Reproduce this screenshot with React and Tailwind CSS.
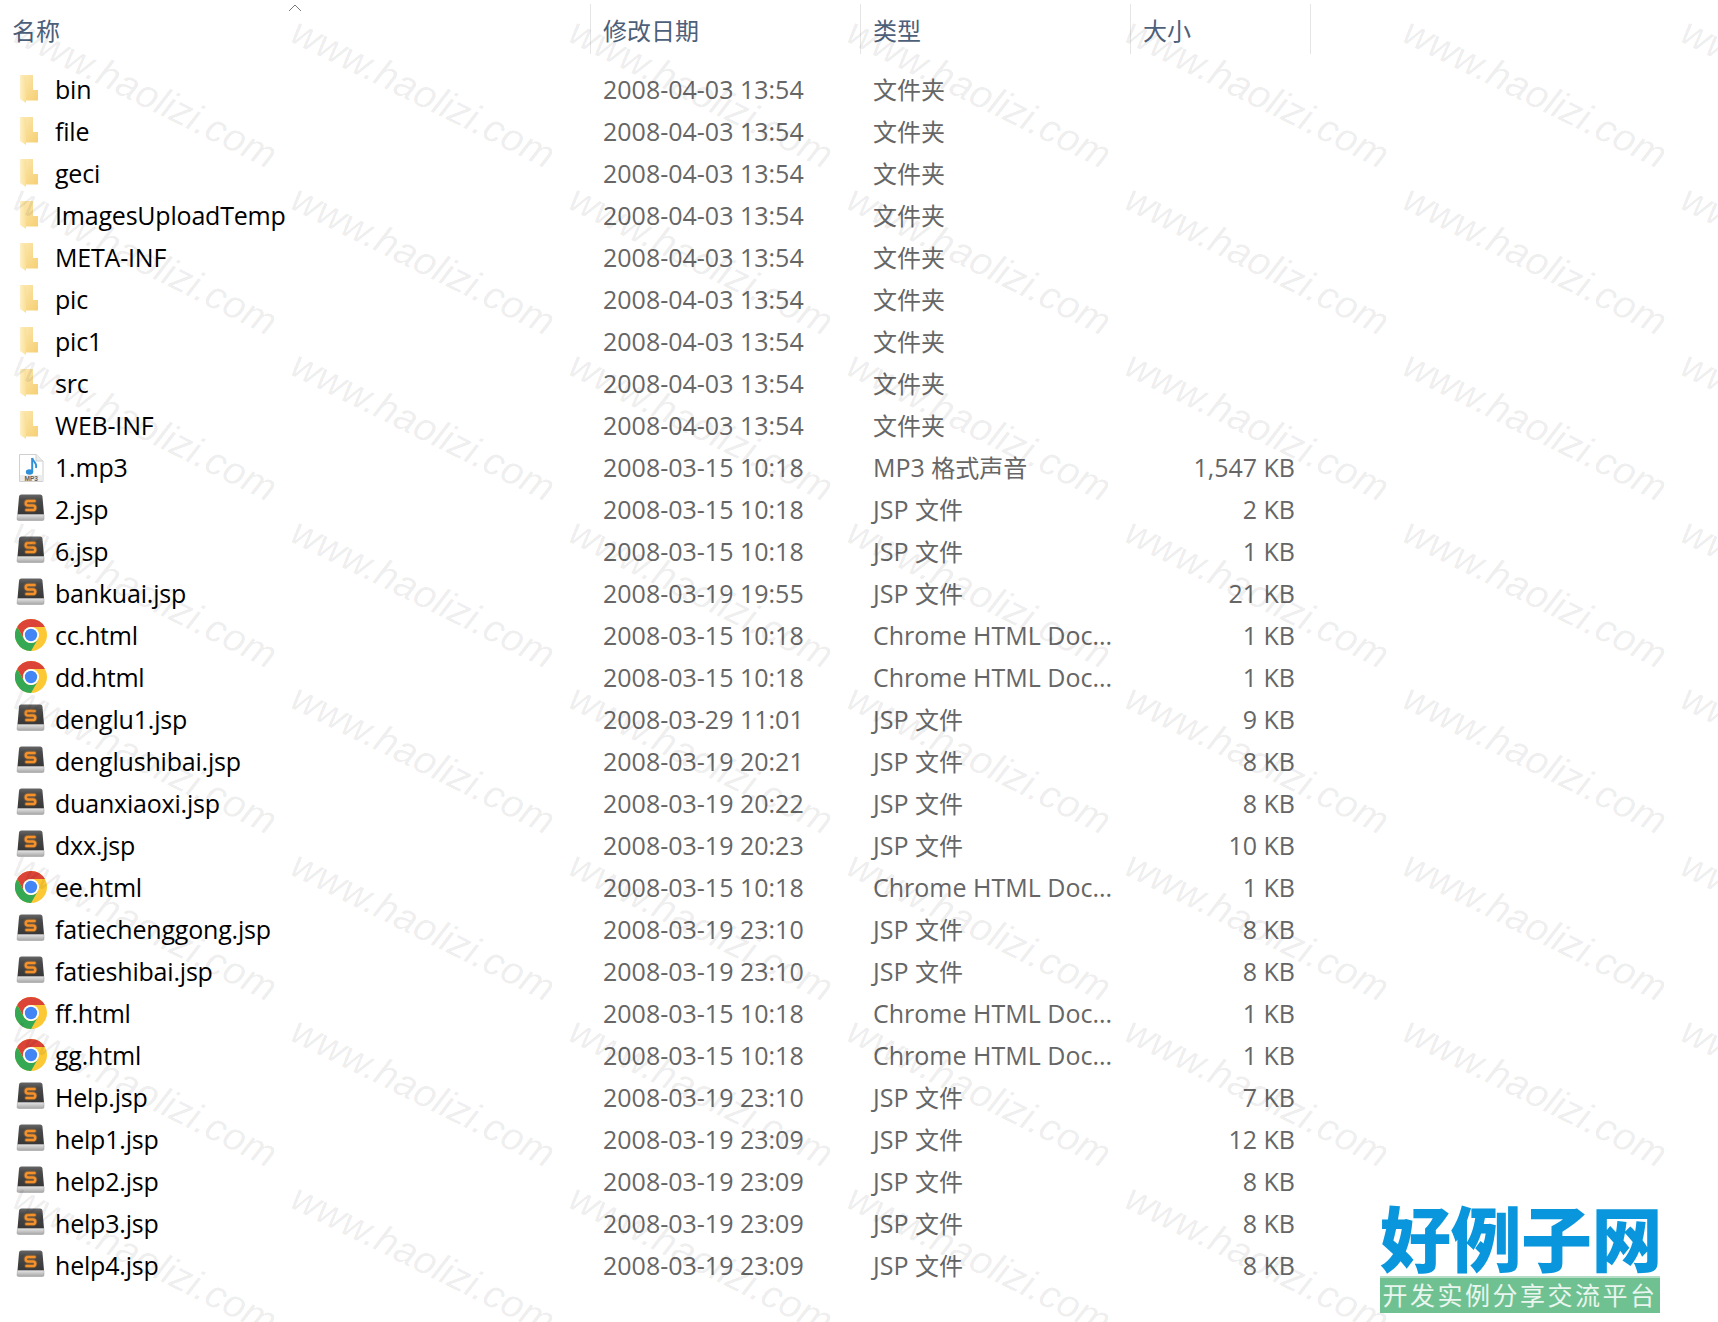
import React from "react";

const FONT = "font-['Open_Sans','Noto_Sans_CJK_SC',sans-serif]";

const folders = ["bin","file","geci","ImagesUploadTemp","META-INF","pic","pic1","src","WEB-INF"].map(n => [n,"folder","2008-04-03 13:54","文件夹",""]);
const J = "JSP 文件", C = "Chrome HTML Doc...";
const files = [
  ["1.mp3","mp3","2008-03-15 10:18","MP3 格式声音","1,547 KB"],
  ["2.jsp","s","2008-03-15 10:18",J,"2 KB"],
  ["6.jsp","s","2008-03-15 10:18",J,"1 KB"],
  ["bankuai.jsp","s","2008-03-19 19:55",J,"21 KB"],
  ["cc.html","c","2008-03-15 10:18",C,"1 KB"],
  ["dd.html","c","2008-03-15 10:18",C,"1 KB"],
  ["denglu1.jsp","s","2008-03-29 11:01",J,"9 KB"],
  ["denglushibai.jsp","s","2008-03-19 20:21",J,"8 KB"],
  ["duanxiaoxi.jsp","s","2008-03-19 20:22",J,"8 KB"],
  ["dxx.jsp","s","2008-03-19 20:23",J,"10 KB"],
  ["ee.html","c","2008-03-15 10:18",C,"1 KB"],
  ["fatiechenggong.jsp","s","2008-03-19 23:10",J,"8 KB"],
  ["fatieshibai.jsp","s","2008-03-19 23:10",J,"8 KB"],
  ["ff.html","c","2008-03-15 10:18",C,"1 KB"],
  ["gg.html","c","2008-03-15 10:18",C,"1 KB"],
  ["Help.jsp","s","2008-03-19 23:10",J,"7 KB"],
  ["help1.jsp","s","2008-03-19 23:09",J,"12 KB"],
  ["help2.jsp","s","2008-03-19 23:09",J,"8 KB"],
  ["help3.jsp","s","2008-03-19 23:09",J,"8 KB"],
  ["help4.jsp","s","2008-03-19 23:09",J,"8 KB"],
];
const rows = [...folders, ...files];

function Folder() {
  return (
    <svg width="32" height="32" viewBox="0 0 32 32">
      <defs>
        <linearGradient id="fa" x1="0" x2="1" y1="0" y2="1"><stop offset="0" stopColor="#fce9b4"/><stop offset="1" stopColor="#f6cf72"/></linearGradient>
        <linearGradient id="fb" x1="0" x2="1" y1="0" y2="0"><stop offset="0" stopColor="#fdf0c6"/><stop offset="1" stopColor="#fbdf95"/></linearGradient>
      </defs>
      <path d="M7 2H19V17H24V27.5H12Z" fill="url(#fa)"/>
      <path d="M6 2L12 4V30L6 26Z" fill="url(#fb)"/>
    </svg>
  );
}
function Mp3() {
  return (
    <svg width="32" height="32" viewBox="0 0 32 32">
      <path d="M5.5 3.5H22L29 10V30.5H5.5Z" fill="#fff" stroke="#cfcfcf"/>
      <path d="M22 3.5V10H29" fill="#ececec" stroke="#cfcfcf"/>
      <rect x="6" y="24" width="22.5" height="6" fill="#ececec"/>
      <path d="M18.2 7V21" stroke="#2f8fd8" strokeWidth="2"/>
      <path d="M18.2 7C19 11 23.5 11.500 22 17" stroke="#2f8fd8" strokeWidth="1.800" fill="none"/>
      <ellipse cx="15.500" cy="21" rx="3.700" ry="2.800" fill="#2f8fd8"/>
      <text x="17.200" y="29.500" textAnchor="middle" fontSize="6.500" fontWeight="700" fill="#5f5f5f" fontFamily="Liberation Sans, sans-serif">MP3</text>
    </svg>
  );
}
function Sublime() {
  return (
    <svg width="32" height="32" viewBox="0 0 32 32">
      <defs>
        <linearGradient id="sa" x1="0" x2="0" y1="0" y2="1"><stop offset="0" stopColor="#666666"/><stop offset="0.25" stopColor="#4b4b4b"/><stop offset="1" stopColor="#373737"/></linearGradient>
        <linearGradient id="sb" x1="0" x2="0" y1="0" y2="1"><stop offset="0" stopColor="#e4e4e4"/><stop offset="1" stopColor="#a5a5a5"/></linearGradient>
      </defs>
      <path d="M5 4Q5 1.500 7.500 1.500H26Q28.500 1.500 28.500 4L30 21.500H3.500Z" fill="url(#sa)"/>
      <path d="M3.500 21.500H30V26Q30 27.500 28.500 27.500H5Q3 27.500 3 26Z" fill="url(#sb)" stroke="#9a9a9a" strokeWidth="0.500"/>
      <path d="M20.500 8H14Q11.800 8 11.800 10.200T14 12.500H19Q21.200 12.500 21.200 14.800T19 17H12.500" fill="none" stroke="#f08a24" strokeOpacity="0.25" strokeWidth="4.500" strokeLinecap="round"/>
      <path d="M20.500 8H14Q11.800 8 11.800 10.200T14 12.500H19Q21.200 12.500 21.200 14.800T19 17H12.500" fill="none" stroke="#f4912a" strokeWidth="2.600" strokeLinecap="round"/>
    </svg>
  );
}
function Chrome() {
  return (
    <svg width="32" height="32" viewBox="0 0 32 32" className="translate-x-px">
      <circle cx="16" cy="16" r="16" fill="#fcc934"/>
      <path d="M16 0A16 16 0 0 1 29.860 8H16A8 8 0 0 0 9.070 20L2.140 8A16 16 0 0 1 16 0Z" fill="#db4437"/>
      <path d="M2.140 8A16 16 0 0 0 16 32L22.930 20A8 8 0 0 1 9.070 20Z" fill="#34a853"/>
      <circle cx="16" cy="16" r="8" fill="#fff"/>
      <circle cx="16" cy="16" r="6.200" fill="#4285f4"/>
    </svg>
  );
}
const icons = { folder: Folder, mp3: Mp3, s: Sublime, c: Chrome };

function Mixed({ text }) {
  return text.split(/([\u4e00-\u9fff]+)/).map((p, i) =>
    /[\u4e00-\u9fff]/.test(p) ? <span key={i} className="text-[24px]">{p}</span> : <span key={i}>{p}</span>
  );
}

function Row({ r }) {
  const Icon = icons[r[1]];
  return (
    <div className="flex h-[42px] items-center">
      <div className="flex w-[603px] items-center">
        <div className="ml-[14px] flex w-[41px] shrink-0"><Icon /></div>
        <span className="text-[25px] leading-none tracking-[-0.2px] text-black">{r[0]}</span>
      </div>
      <span className="w-[270px] text-[25px] leading-none text-[#666666]">{r[2]}</span>
      <span className="w-[270px] text-[25px] leading-none text-[#666666]"><Mixed text={r[3]} /></span>
      <span className="w-[152px] text-right text-[25px] leading-none text-[#666666]">{r[4]}</span>
    </div>
  );
}

function Head({ w, children, sep }) {
  return (
    <div className={`relative flex h-[50px] items-center pt-[4px] ${w}`}>
      <span className="text-[24px] leading-none text-[#4c607a]">{children}</span>
      {sep && <div className="absolute left-[-13px] top-0 h-[50px] w-px bg-[#e5e5e5]" />}
    </div>
  );
}

export default function App() {
  const cells = Array.from({ length: 54 });
  return (
    <div className={`relative h-[1322px] w-[1718px] overflow-hidden bg-white ${FONT}`}>
      <div className="pt-[4px]">
        <div className="relative flex">
          <Head w="w-[603px] pl-[12px]">名称</Head>
          <Head w="w-[270px]" sep>修改日期</Head>
          <Head w="w-[270px]" sep>类型</Head>
          <Head w="w-[180px]" sep>大小</Head>
          <svg className="absolute left-[288px] top-0" width="14" height="8" viewBox="0 0 14 8"><path d="M1 7l6-6 6 6" fill="none" stroke="#7a7a7a" /></svg>
          <div className="absolute left-[1310px] top-0 h-[50px] w-px bg-[#e5e5e5]" />
        </div>
        <div className="mt-[14px]">
          {rows.map((r) => <Row key={r[0]} r={r} />)}
        </div>
      </div>

      <div className="pointer-events-none absolute left-[7px] top-[3px] grid grid-cols-[repeat(7,278px)] auto-rows-[166.5px]">
        {cells.map((_, i) => (
          <div key={i} className="origin-top-left translate-x-[18px] translate-y-[8px] rotate-[26.5deg] whitespace-nowrap font-['Liberation_Sans',sans-serif] text-[39px] italic leading-none text-black/[0.08]">
            www.haolizi.com
          </div>
        ))}
      </div>

      <div className="absolute left-[1380px] top-[1197px] w-[280px] font-['Noto_Sans_CJK_SC',sans-serif]">
        <div className="whitespace-nowrap text-center text-[71px] font-black leading-[76px] tracking-[-0.5px] text-[#0a96dc]">好例子网</div>
        <div className="mt-[3px] flex h-[37px] items-center justify-center whitespace-nowrap border-t-2 border-[#b5dcc4] bg-[#6fc191] pb-[3px] text-[25px] leading-none tracking-[2.500px] text-white/85">开发实例分享交流平台</div>
      </div>
    </div>
  );
}
